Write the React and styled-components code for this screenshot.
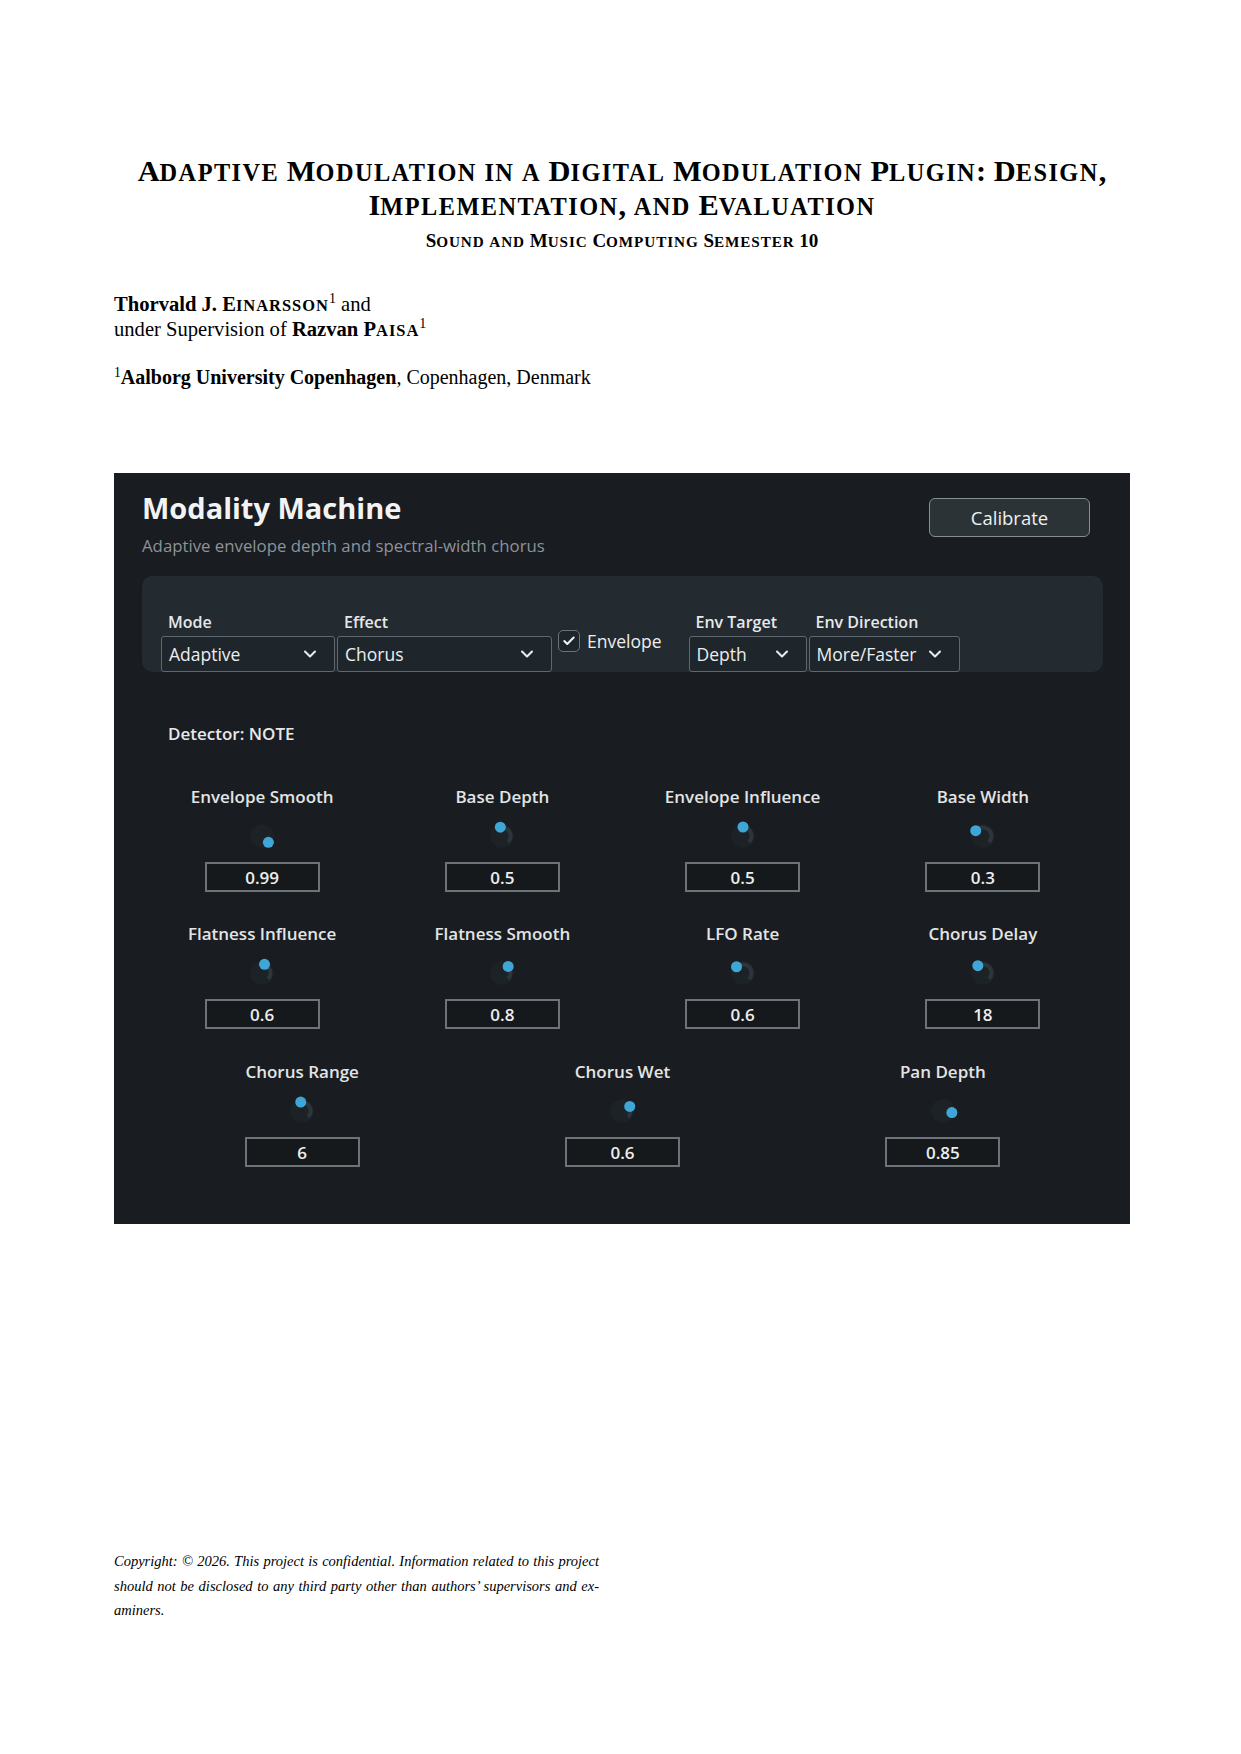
import React from 'react';
import styled, { createGlobalStyle } from 'styled-components';
import { ChevronDown, Check } from 'lucide-react';

const GlobalStyle = createGlobalStyle`
  html, body {
    margin: 0;
    padding: 0;
    background: #ffffff;
  }
  * {
    box-sizing: border-box;
  }
`;

const Page = styled.div`
  width: 1241px;
  min-height: 1754px;
  padding: 155px 111px 0 114px;
  font-family: "Liberation Serif", "Times New Roman", serif;
  color: #000;
  display: flex;
  flex-direction: column;
`;

const Title = styled.h1`
  margin: 0;
  text-align: center;
  font-size: 30.4px;
  line-height: 33.5px;
  font-weight: bold;
`;

const Subtitle = styled.div`
  margin-top: 8px;
  text-align: center;
  font-size: 19px;
  line-height: 22px;
  font-weight: bold;
`;

// LaTeX-like small caps: lowercase letters drawn as smaller, slightly spaced capitals
const Small = styled.span`
  font-size: 0.8em;
  line-height: 1;
  letter-spacing: 0.06em;
  text-transform: uppercase;
`;

const sc = text =>
  text.split(/([a-z]+)/).map((part, i) =>
    /^[a-z]+$/.test(part) ? <Small key={i}>{part}</Small> : part
  );

const Authors = styled.div`
  margin-top: 40px;
  font-size: 20.6px;
  line-height: 25px;
`;

const Affiliation = styled.div`
  margin-top: 23px;
  font-size: 20px;
  line-height: 25px;
`;

const Sup = styled.sup`
  font-size: 0.68em;
  line-height: 0;
  vertical-align: 0.55em;
`;

/* ---- plugin panel ---- */

const Panel = styled.div`
  margin-top: 83px;
  width: 1016px;
  height: 751px;
  background: #191c20;
  padding: 18px 27px 0 28px;
  font-family: "Open Sans", "Noto Sans", sans-serif;
  color: #e4e6e8;
`;

const Header = styled.div`
  display: flex;
  justify-content: space-between;
  align-items: flex-start;
`;

const PluginName = styled.div`
  font-size: 29px;
  line-height: 34px;
  font-weight: 700;
  color: #f2f3f4;
`;

const Tagline = styled.div`
  margin-top: 11px;
  font-size: 16.8px;
  line-height: 20px;
  color: #8c939a;
`;

const CalibrateButton = styled.button`
  margin-top: 7px;
  margin-right: 13px;
  width: 161px;
  height: 39px;
  border-radius: 6px;
  border: 1.5px solid #858e94;
  background: #2b3336;
  color: #eef0f1;
  font-family: inherit;
  font-size: 18.5px;
  font-weight: 500;
`;

const ControlsBar = styled.div`
  margin-top: 20px;
  height: 96px;
  background: #232a30;
  border-radius: 10px;
  padding-left: 19px;
  display: flex;
  align-items: flex-end;
`;

const Field = styled.div`
  display: flex;
  flex-direction: column;
  margin-right: 2px;
`;

const FieldLabel = styled.div`
  padding-left: 7px;
  font-size: 16px;
  line-height: 22px;
  font-weight: 600;
  margin-bottom: 3px;
  color: #e6e8ea;
`;

const Select = styled.div`
  width: ${p => p.w}px;
  height: 36px;
  border: 1.5px solid #5f686f;
  border-radius: 3px;
  background: #1f262b;
  display: flex;
  align-items: center;
  justify-content: space-between;
  padding: 0 14px 0 7px;
  font-size: 17.5px;
  font-weight: 500;
  color: #eceeef;
`;

const Toggle = styled.label`
  align-self: flex-end;
  margin: 0 27px 19px 4px;
  display: flex;
  align-items: center;
  gap: 7px;
  font-size: 17.5px;
  font-weight: 500;
  color: #eceeef;
`;

const CheckBox = styled.span`
  width: 22px;
  height: 22px;
  border: 1.5px solid #6c7379;
  border-radius: 5px;
  background: #1f262b;
  display: flex;
  align-items: center;
  justify-content: center;
`;

const Detector = styled.div`
  margin-top: 51px;
  padding-left: 26px;
  font-size: 17px;
  line-height: 22px;
  font-weight: 600;
  color: #e6e8ea;
`;

const KnobGrid = styled.div`
  display: grid;
  grid-template-columns: repeat(${p => p.cols}, 1fr);
  row-gap: 31px;
  margin-top: ${p => p.mt}px;
`;

const KnobCell = styled.div`
  display: flex;
  flex-direction: column;
  align-items: center;
`;

const KnobLabel = styled.div`
  font-size: 17px;
  line-height: 22px;
  font-weight: 600;
  color: #e2e4e6;
`;

const KnobFace = styled.svg`
  margin-top: 12px;
  display: block;
`;

const ValueBox = styled.div`
  margin-top: 10px;
  width: 115px;
  height: 30px;
  border: 2px solid #6e7378;
  background: #16191c;
  display: flex;
  align-items: center;
  justify-content: center;
  font-size: 17px;
  font-weight: 600;
  color: #eceeef;
`;

const Footer = styled.div`
  margin-top: 325px;
  width: 485px;
  font-size: 14.5px;
  line-height: 24.5px;
  font-style: italic;
`;

const FooterLine = styled.div`
  text-align: justify;
  text-align-last: ${p => (p.last ? 'left' : 'justify')};
  white-space: nowrap;
`;

const polar = (cx, cy, r, deg) => {
  const a = ((deg - 90) * Math.PI) / 180;
  return [cx + r * Math.cos(a), cy + r * Math.sin(a)];
};

const Knob = ({ pos }) => {
  const angle = -135 + 270 * pos;
  const [sx, sy] = polar(16, 16, 8.5, angle);
  const [ex, ey] = polar(16, 16, 8.5, 135);
  const large = 135 - angle > 180 ? 1 : 0;
  const [dx, dy] = polar(16, 16, 9, angle);
  return (
    <KnobFace width="32" height="32" viewBox="0 0 32 32">
      <circle cx="16" cy="16" r="12" fill="#1c2226" />
      <path
        d={`M ${sx} ${sy} A 8.5 8.5 0 ${large} 1 ${ex} ${ey}`}
        stroke="#2b353b"
        strokeWidth="4"
        fill="none"
      />
      <circle cx={dx} cy={dy} r="5.5" fill="#3ea7d8" />
    </KnobFace>
  );
};

const firstRows = [
  { label: 'Envelope Smooth', value: '0.99', pos: 1.0 },
  { label: 'Base Depth', value: '0.5', pos: 0.46 },
  { label: 'Envelope Influence', value: '0.5', pos: 0.5 },
  { label: 'Base Width', value: '0.3', pos: 0.3 },
  { label: 'Flatness Influence', value: '0.6', pos: 0.56 },
  { label: 'Flatness Smooth', value: '0.8', pos: 0.66 },
  { label: 'LFO Rate', value: '0.6', pos: 0.33 },
  { label: 'Chorus Delay', value: '18', pos: 0.37 },
];

const lastRow = [
  { label: 'Chorus Range', value: '6', pos: 0.47 },
  { label: 'Chorus Wet', value: '0.6', pos: 0.72 },
  { label: 'Pan Depth', value: '0.85', pos: 0.87 },
];

const KnobControl = ({ label, value, pos }) => (
  <KnobCell>
    <KnobLabel>{label}</KnobLabel>
    <Knob pos={pos} />
    <ValueBox>{value}</ValueBox>
  </KnobCell>
);

const SelectField = ({ label, value, w }) => (
  <Field>
    <FieldLabel>{label}</FieldLabel>
    <Select w={w}>
      <span>{value}</span>
      <ChevronDown size={20} strokeWidth={2.5} color="#e8eaec" />
    </Select>
  </Field>
);

const App = () => (
  <>
    <GlobalStyle />
    <Page>
      <Title>
        {sc('Adaptive Modulation in a Digital Modulation Plugin: Design,')}
        <br />
        {sc('Implementation, and Evaluation')}
      </Title>
      <Subtitle>{sc('Sound and Music Computing Semester 10')}</Subtitle>

      <Authors>
        <b>Thorvald J. {sc('Einarsson')}</b>
        <Sup>1</Sup> and
        <br />
        under Supervision of <b>Razvan {sc('Paisa')}</b>
        <Sup>1</Sup>
      </Authors>
      <Affiliation>
        <Sup>1</Sup>
        <b>Aalborg University Copenhagen</b>, Copenhagen, Denmark
      </Affiliation>

      <Panel>
        <Header>
          <div>
            <PluginName>Modality Machine</PluginName>
            <Tagline>Adaptive envelope depth and spectral-width chorus</Tagline>
          </div>
          <CalibrateButton>Calibrate</CalibrateButton>
        </Header>

        <ControlsBar>
          <SelectField label="Mode" value="Adaptive" w={174} />
          <SelectField label="Effect" value="Chorus" w={215} />
          <Toggle>
            <CheckBox>
              <Check size={14} strokeWidth={3.5} color="#f0f2f3" />
            </CheckBox>
            Envelope
          </Toggle>
          <SelectField label="Env Target" value="Depth" w={118} />
          <SelectField label="Env Direction" value="More/Faster" w={151} />
        </ControlsBar>

        <Detector>Detector: NOTE</Detector>

        <KnobGrid cols={4} mt={41}>
          {firstRows.map(k => (
            <KnobControl key={k.label} {...k} />
          ))}
        </KnobGrid>
        <KnobGrid cols={3} mt={32}>
          {lastRow.map(k => (
            <KnobControl key={k.label} {...k} />
          ))}
        </KnobGrid>
      </Panel>

      <Footer>
        <FooterLine>
          Copyright: © 2026. This project is confidential. Information related to this project
        </FooterLine>
        <FooterLine>
          should not be disclosed to any third party other than authors’ supervisors and ex-
        </FooterLine>
        <FooterLine last>aminers.</FooterLine>
      </Footer>
    </Page>
  </>
);

export default App;
